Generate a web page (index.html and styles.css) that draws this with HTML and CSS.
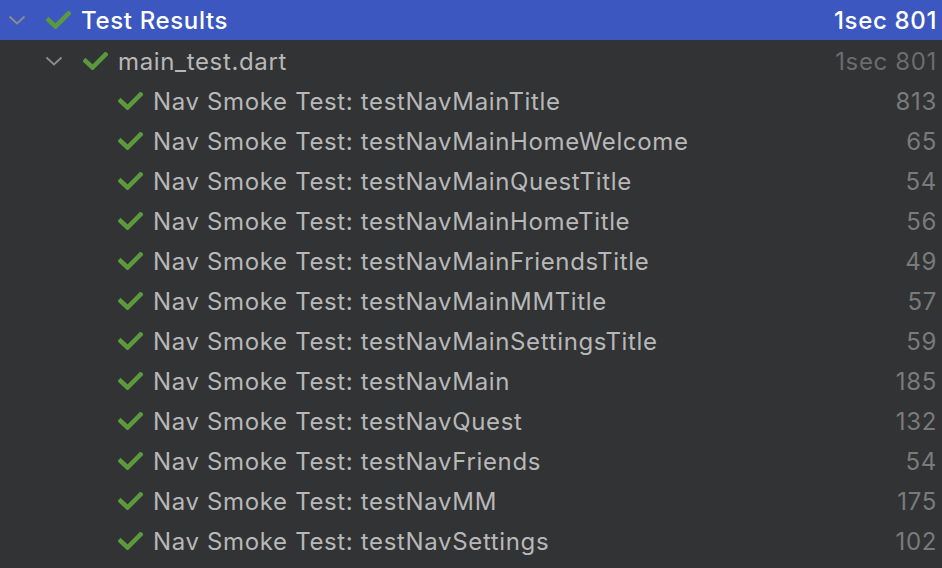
FILE: index.html
```html
<!DOCTYPE html>
<html>
<head>
<meta charset="utf-8">
<link rel="stylesheet" href="styles.css">
</head>
<body>
<div class="tree">
  <div class="row selected lvl0">
    <svg class="chev" viewBox="0 0 18 10"><path d="M1.5 1.5 L9 8.5 L16.5 1.5"/></svg>
    <svg class="check" viewBox="0 0 25 18"><path d="M2.5 9 L9.5 15.5 L22.5 2.5"/></svg>
    <span class="name">Test Results</span>
    <span class="time">1sec 801</span>
  </div>
  <div class="row lvl1">
    <svg class="chev" viewBox="0 0 18 10"><path d="M1.5 1.5 L9 8.5 L16.5 1.5"/></svg>
    <svg class="check" viewBox="0 0 25 18"><path d="M2.5 9 L9.5 15.5 L22.5 2.5"/></svg>
    <span class="name">main_test.dart</span>
    <span class="time">1sec 801</span>
  </div>
  <div class="row lvl2"><svg class="check" viewBox="0 0 25 18"><path d="M2.5 9 L9.5 15.5 L22.5 2.5"/></svg><span class="name">Nav Smoke Test: testNavMainTitle</span><span class="time">813</span></div>
  <div class="row lvl2"><svg class="check" viewBox="0 0 25 18"><path d="M2.5 9 L9.5 15.5 L22.5 2.5"/></svg><span class="name">Nav Smoke Test: testNavMainHomeWelcome</span><span class="time">65</span></div>
  <div class="row lvl2"><svg class="check" viewBox="0 0 25 18"><path d="M2.5 9 L9.5 15.5 L22.5 2.5"/></svg><span class="name">Nav Smoke Test: testNavMainQuestTitle</span><span class="time">54</span></div>
  <div class="row lvl2"><svg class="check" viewBox="0 0 25 18"><path d="M2.5 9 L9.5 15.5 L22.5 2.5"/></svg><span class="name">Nav Smoke Test: testNavMainHomeTitle</span><span class="time">56</span></div>
  <div class="row lvl2"><svg class="check" viewBox="0 0 25 18"><path d="M2.5 9 L9.5 15.5 L22.5 2.5"/></svg><span class="name">Nav Smoke Test: testNavMainFriendsTitle</span><span class="time">49</span></div>
  <div class="row lvl2"><svg class="check" viewBox="0 0 25 18"><path d="M2.5 9 L9.5 15.5 L22.5 2.5"/></svg><span class="name">Nav Smoke Test: testNavMainMMTitle</span><span class="time">57</span></div>
  <div class="row lvl2"><svg class="check" viewBox="0 0 25 18"><path d="M2.5 9 L9.5 15.5 L22.5 2.5"/></svg><span class="name">Nav Smoke Test: testNavMainSettingsTitle</span><span class="time">59</span></div>
  <div class="row lvl2"><svg class="check" viewBox="0 0 25 18"><path d="M2.5 9 L9.5 15.5 L22.5 2.5"/></svg><span class="name">Nav Smoke Test: testNavMain</span><span class="time">185</span></div>
  <div class="row lvl2"><svg class="check" viewBox="0 0 25 18"><path d="M2.5 9 L9.5 15.5 L22.5 2.5"/></svg><span class="name">Nav Smoke Test: testNavQuest</span><span class="time">132</span></div>
  <div class="row lvl2"><svg class="check" viewBox="0 0 25 18"><path d="M2.5 9 L9.5 15.5 L22.5 2.5"/></svg><span class="name">Nav Smoke Test: testNavFriends</span><span class="time">54</span></div>
  <div class="row lvl2"><svg class="check" viewBox="0 0 25 18"><path d="M2.5 9 L9.5 15.5 L22.5 2.5"/></svg><span class="name">Nav Smoke Test: testNavMM</span><span class="time">175</span></div>
  <div class="row lvl2"><svg class="check" viewBox="0 0 25 18"><path d="M2.5 9 L9.5 15.5 L22.5 2.5"/></svg><span class="name">Nav Smoke Test: testNavSettings</span><span class="time">102</span></div>
</div>
</body>
</html>
```

FILE: styles.css
```css
html, body {
  margin: 0;
  padding: 0;
  background: #323335;
  height: 100%;
  overflow: hidden;
}
body {
  font-family: Inter, "Liberation Sans", sans-serif;
  font-size: 24px;
  letter-spacing: 0.65px;
  color: #b8b8b8;
}
.tree {
  display: flex;
  flex-direction: column;
}
.row {
  box-sizing: border-box;
  display: flex;
  align-items: center;
  height: 40px;
  padding-top: 2px;
  padding-right: 5px;
  white-space: nowrap;
}
.row.selected {
  padding-top: 0;
  background: #3c58c0;
  color: #ffffff;
}
.lvl0 { padding-left: 8px; }
.lvl1 { padding-left: 45px; }
.lvl2 { padding-left: 118px; }
.chev {
  width: 18px;
  height: 10px;
  margin-right: 20px;
  flex: none;
}
.chev path {
  fill: none;
  stroke: #8c8c8c;
  stroke-width: 1.8;
}
.check {
  width: 25px;
  height: 18px;
  margin-right: 10px;
  flex: none;
}
.check path {
  fill: none;
  stroke: #5a9a3c;
  stroke-width: 4.5;
  stroke-linecap: square;
}
.name {
  flex: 1;
}
.selected .name,
.selected .time {
  font-weight: 500;
}
.time {
  color: #7a7a7a;
}
.selected .time {
  color: #ffffff;
}
.lvl1 .time {
  color: #6c6c6c;
}
```
